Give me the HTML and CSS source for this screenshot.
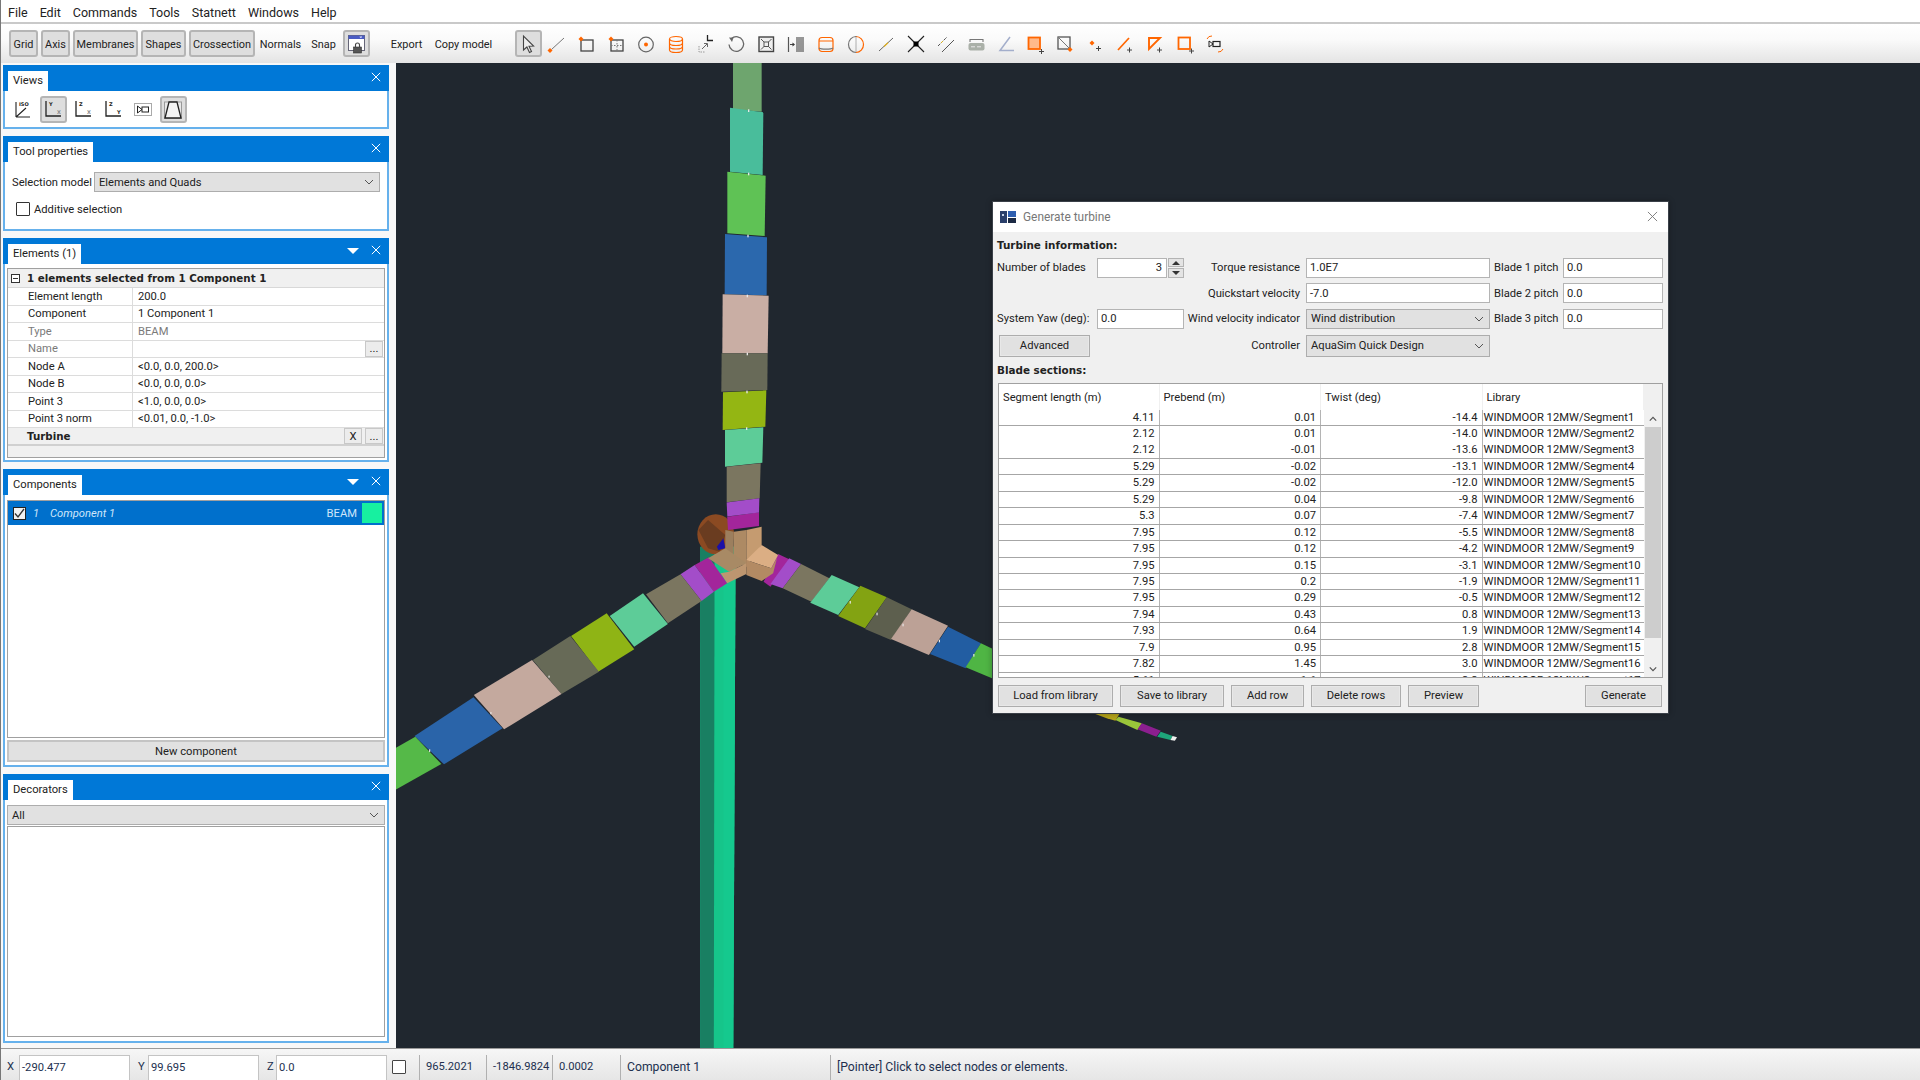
FILE: index.html
```html
<!DOCTYPE html>
<html lang="en">
<head>
<meta charset="utf-8">
<title>Generate turbine</title>
<link rel="stylesheet" href="styles.css">
</head>
<body>
<div class="app">
  <nav class="menubar"><span>File</span><span>Edit</span><span>Commands</span><span>Tools</span><span>Statnett</span><span>Windows</span><span>Help</span></nav>

  <div class="toolbar">
    <div class="tb-left">
      <button class="tbtn on w-grid">Grid</button>
      <button class="tbtn on w-axis">Axis</button>
      <button class="tbtn on w-memb">Membranes</button>
      <button class="tbtn on w-shape">Shapes</button>
      <button class="tbtn on w-cross">Crossection</button>
      <button class="tbtn w-norm">Normals</button>
      <button class="tbtn w-snap">Snap</button>
      <button class="tbtn on w-lock" aria-label="Lock">
        <svg width="21" height="21" viewBox="0 0 21 21"><rect x="2.500" y="1.500" width="16" height="15" fill="#fff" stroke="#667"/><rect x="2.500" y="1.500" width="16" height="3.500" fill="#4a5cc4"/><path d="M14 2.300l1.600 1.600m0-1.600l-1.600 1.600" stroke="#fff" stroke-width=".7"/><rect x="7.500" y="13" width="8" height="6" fill="#555" stroke="#333" stroke-width=".6"/><path d="M9.500 13v-2a2 2 0 0 1 4 0v2" fill="none" stroke="#444" stroke-width="1.100"/></svg>
      </button>
      <button class="tbtn w-export">Export</button>
      <button class="tbtn w-copy">Copy model</button>
    </div>
    <div class="tb-icons">
      <span class="ic ic-on"><svg width="20" height="20" viewBox="0 0 20 20"><path d="M5.500 2v14l3.400-3 2.600 5.500 2-1-2.500-5.200 4.600-.3z" fill="#eee" stroke="#444" stroke-width="1.100"/></svg></span>
      <svg class="ic" viewBox="0 0 20 20"><path d="M5.500 15.500L18 4" stroke="#777"/><path d="M4 14l2.500 2.500L4 19l-2.500-2.500z" fill="#f60"/></svg>
      <svg class="ic" viewBox="0 0 20 20"><rect x="5" y="6" width="12" height="11" fill="none" stroke="#444" stroke-width="1.300"/><path d="M5 2.500L7.500 5 5 7.500 2.500 5z" fill="#f60"/></svg>
      <svg class="ic" viewBox="0 0 20 20"><rect x="5" y="6" width="12" height="11" fill="none" stroke="#444" stroke-width="1.300"/><path d="M11 6v11M5 11.500h12" stroke="#777" stroke-dasharray="1.500 1.500"/><path d="M5 2.500L7.500 5 5 7.500 2.500 5z" fill="#f60"/></svg>
      <svg class="ic" viewBox="0 0 20 20"><circle cx="10" cy="10.500" r="7.300" fill="none" stroke="#666" stroke-width="1.200"/><circle cx="10" cy="10.500" r="2" fill="#f60"/></svg>
      <svg class="ic" viewBox="0 0 20 20"><g fill="none" stroke="#f60" stroke-width="1.200"><ellipse cx="10" cy="5" rx="6.500" ry="2.500"/><path d="M3.500 5v11c0 1.500 3 2.500 6.500 2.500s6.500-1 6.500-2.500V5M3.500 9c0 1.500 3 2.500 6.500 2.500S16.500 10.500 16.500 9M3.500 12.500c0 1.500 3 2.500 6.500 2.500s6.500-1 6.500-2.500"/></g></svg>
      <svg class="ic" viewBox="0 0 20 20"><path d="M11.500 1v5.500H17" fill="none" stroke="#222" stroke-width="1.300"/><path d="M3 12v6h6" fill="none" stroke="#999" stroke-dasharray="1.500 1"/><path d="M6 15l5-5M8 9.500h3.500V13" fill="none" stroke="#666"/></svg>
      <svg class="ic" viewBox="0 0 20 20"><path d="M5.500 4.500A7.300 7.300 0 1 1 3 10.500" fill="none" stroke="#666" stroke-width="1.300"/><path d="M3 3.500l4.500.2L6 8z" fill="#666"/></svg>
      <svg class="ic" viewBox="0 0 20 20"><rect x="3" y="3" width="14.500" height="14.500" fill="#eee" stroke="#444" stroke-width="1.400"/><rect x="8" y="8" width="4.500" height="4.500" fill="none" stroke="#555"/><path d="M5 5l3 3M15.500 5l-3 3M5 15.500l3-3M15.500 15.500l-3-3" stroke="#555"/></svg>
      <svg class="ic" viewBox="0 0 20 20"><path d="M2.500 3v15" stroke="#555" stroke-width="1.200"/><path d="M4 10.500h4" stroke="#444"/><path d="M6.500 8.500l2.500 2-2.500 2z" fill="#333"/><path d="M11 3v15M13 3v15M15 3v15M17 3v15" stroke="#555" stroke-width="1.200"/></svg>
      <svg class="ic" viewBox="0 0 20 20"><rect x="3" y="3.500" width="14" height="14" rx="3" fill="none" stroke="#f60" stroke-width="1.200"/><path d="M3 7h14" stroke="#f60"/><path d="M3 14c2 1.500 12 1.500 14 0" fill="none" stroke="#777" stroke-width="1.200"/></svg>
      <svg class="ic" viewBox="0 0 20 20"><path d="M10 2.500a7.500 8 0 0 0 0 16" fill="none" stroke="#777" stroke-width="1.200"/><path d="M10 2.500a7.500 8 0 0 1 0 16" fill="none" stroke="#f60" stroke-width="1.200"/><path d="M10 2.500v16" stroke="#666" stroke-dasharray="1 1"/></svg>
      <svg class="ic" viewBox="0 0 20 20"><path d="M3 17L17 4" stroke="#666"/><path d="M8 12.500l4-3.700" stroke="#e0b020" stroke-width="1.200"/></svg>
      <svg class="ic" viewBox="0 0 20 20"><path d="M2 2l16 16M18 2L2 18" stroke="#222" stroke-width="1.100"/><rect x="7.500" y="7.500" width="5" height="5" fill="#000"/></svg>
      <svg class="ic" viewBox="0 0 20 20"><path d="M2 12L11 3" stroke="#555" stroke-dasharray="3 1"/><path d="M6 18L18 6" stroke="#555"/><path d="M5 9l2-2" stroke="#d8b020"/></svg>
      <svg class="ic" viewBox="0 0 20 20"><path d="M4 5.500h13M4 5v3M17 5v3" stroke="#777" stroke-width="1.100" fill="none"/><rect x="2.500" y="9" width="16" height="7.500" rx="2" fill="#aab0a8"/><path d="M5 12.800h4M11 12.800h4" stroke="#e8e8e8"/></svg>
      <svg class="ic" viewBox="0 0 20 20"><path d="M14 3L4 16.500h14" fill="none" stroke="#a3aecb" stroke-width="1.500"/></svg>
      <svg class="ic" viewBox="0 0 20 20"><rect x="3.500" y="3.500" width="11.500" height="11.500" fill="#ffb98a" stroke="#f60" stroke-width="1.800"/><path d="M14 17.500h5M16.500 15v5" stroke="#444"/></svg>
      <svg class="ic" viewBox="0 0 20 20"><rect x="3" y="3" width="12" height="12" fill="none" stroke="#555" stroke-width="1.300"/><path d="M3 3l12 12" stroke="#777"/><path d="M15 13l2.500 2.500-2.500 2.500-2.500-2.500z" fill="#f60"/></svg>
      <svg class="ic" viewBox="0 0 20 20"><path d="M7 6.500l2.500 2.500L7 11.500 4.500 9z" fill="#f60"/><path d="M11 14.500h5M13.500 12v5" stroke="#444"/></svg>
      <svg class="ic" viewBox="0 0 20 20"><path d="M3 16L14 4" stroke="#f60" stroke-width="1.700"/><path d="M12 16h5M14.500 13.500v5" stroke="#444"/></svg>
      <svg class="ic" viewBox="0 0 20 20"><path d="M4 4h11L4 15z" fill="none" stroke="#f60" stroke-width="1.900"/><path d="M12 16h5M14.500 13.500v5" stroke="#444"/></svg>
      <svg class="ic" viewBox="0 0 20 20"><rect x="3.500" y="3.500" width="11.500" height="11.500" fill="none" stroke="#f60" stroke-width="1.800"/><path d="M14 17h5M16.500 14.500v5" stroke="#444"/></svg>
      <svg class="ic" viewBox="0 0 20 20"><path d="M2 5a5 5 0 0 1 5-3M18 15a5 5 0 0 1-5 3" fill="none" stroke="#f60"/><path d="M4 7v6l4-3z" fill="none" stroke="#222"/><rect x="8" y="7.500" width="7" height="5" fill="none" stroke="#222" stroke-width="1.200"/></svg>
    </div>
  </div>

  <div class="main">
    <aside class="sidebar">
      <section class="panel p-views">
        <header class="phead"><span class="ptab">Views</span><svg class="px" viewBox="0 0 12 12"><path d="M1 1l10 10M11 1L1 11"/></svg></header>
        <div class="views">
          <svg class="ic" viewBox="0 0 20 20"><path d="M3 2v15M3 17h14M3 17L13 8" stroke="#222" fill="none" stroke-width="1.100"/><text x="6" y="6" class="tiny">ISO</text></svg>
          <span class="ic ic-on"><svg width="20" height="20" viewBox="0 0 20 20"><path d="M3 1v15h15" stroke="#222" fill="none" stroke-width="1.300"/><text x="6" y="6" class="tiny">Y</text><text x="14" y="14" class="tiny light">X</text></svg></span>
          <svg class="ic" viewBox="0 0 20 20"><path d="M3 1v15h15" stroke="#222" fill="none" stroke-width="1.300"/><text x="6" y="6" class="tiny">Z</text><text x="14" y="14" class="tiny light">X</text></svg>
          <svg class="ic" viewBox="0 0 20 20"><path d="M3 1v15h15" stroke="#222" fill="none" stroke-width="1.300"/><text x="6" y="6" class="tiny">Z</text><text x="14" y="14" class="tiny">Y</text></svg>
          <svg class="ic" viewBox="0 0 20 20"><rect x="1.500" y="3.500" width="17" height="12" fill="none" stroke="#555" stroke-dasharray="1 1"/><path d="M4.500 6v7l4.500-3.500z" fill="none" stroke="#222"/><rect x="9" y="7" width="6.500" height="5" fill="none" stroke="#222"/></svg>
          <span class="ic ic-on"><svg width="20" height="20" viewBox="0 0 20 20"><rect x="1.500" y="2" width="17" height="16" fill="#e8e8e8" stroke="#999"/><path d="M2 18L6 2h8l4 16z" fill="#f4f4f4" stroke="#222" stroke-width="1.300"/></svg></span>
        </div>
      </section>

      <section class="panel p-tool">
        <header class="phead"><span class="ptab">Tool properties</span><svg class="px" viewBox="0 0 12 12"><path d="M1 1l10 10M11 1L1 11"/></svg></header>
        <div class="tool">
          <div class="tool-row"><label class="tool-label">Selection model</label>
            <div class="combo tool-combo"><span>Elements and Quads</span><svg class="chev" viewBox="0 0 10 6"><path d="M1 1l4 4 4-4"/></svg></div></div>
          <div class="check-row"><span class="check"></span><span>Additive selection</span></div>
        </div>
      </section>

      <section class="panel p-elem">
        <header class="phead"><span class="ptab">Elements (1)</span><span class="ptri"></span><svg class="px" viewBox="0 0 12 12"><path d="M1 1l10 10M11 1L1 11"/></svg></header>
        <div class="tree">
          <div class="tree-head"><span class="minus"></span><b>1 elements selected from 1 Component 1</b></div>
          <div class="trow"><span>Element length</span><span>200.0</span></div>
          <div class="trow"><span>Component</span><span>1 Component 1</span></div>
          <div class="trow dim"><span>Type</span><span>BEAM</span></div>
          <div class="trow dim"><span>Name</span><span class="tval"><i class="more">...</i></span></div>
          <div class="trow"><span>Node A</span><span>&lt;0.0, 0.0, 200.0&gt;</span></div>
          <div class="trow"><span>Node B</span><span>&lt;0.0, 0.0, 0.0&gt;</span></div>
          <div class="trow"><span>Point 3</span><span>&lt;1.0, 0.0, 0.0&gt;</span></div>
          <div class="trow"><span>Point 3 norm</span><span>&lt;0.01, 0.0, -1.0&gt;</span></div>
          <div class="tree-sub"><b>Turbine</b><i class="more">X</i><i class="more">...</i></div>
          <div class="tree-fill"></div>
        </div>
      </section>

      <section class="panel p-comp">
        <header class="phead"><span class="ptab">Components</span><span class="ptri"></span><svg class="px" viewBox="0 0 12 12"><path d="M1 1l10 10M11 1L1 11"/></svg></header>
        <div class="comp">
          <div class="comp-list">
            <div class="comp-row">
              <span class="comp-check"><svg width="13" height="13" viewBox="0 0 13 13"><path d="M2 6.500l3 3.500 6-8" fill="none" stroke="#333" stroke-width="1.300"/></svg></span>
              <em class="comp-id">1</em><em class="comp-name">Component 1</em><span class="comp-type">BEAM</span><span class="swatch"></span>
            </div>
          </div>
          <button class="wide-btn">New component</button>
        </div>
      </section>

      <section class="panel p-deco">
        <header class="phead"><span class="ptab">Decorators</span><svg class="px" viewBox="0 0 12 12"><path d="M1 1l10 10M11 1L1 11"/></svg></header>
        <div class="deco">
          <div class="combo deco-combo"><span>All</span><svg class="chev" viewBox="0 0 10 6"><path d="M1 1l4 4 4-4"/></svg></div>
          <div class="deco-list"></div>
        </div>
      </section>
    </aside>

    <div class="viewport">
      <svg class="scene" viewBox="0 0 1524 985" width="1524" height="985" aria-hidden="true">
        <g transform="translate(4,417) scale(.3827,.3333)">
          <polygon points="785,200 877,200 871,1704 784,1704" fill="#16c58a"/>
          <polygon points="785,200 822,200 820,1704 784,1704" fill="#197f62"/>
          <polygon points="845,200 877,200 871,1704 845,1704" fill="#15c98e"/>
          <ellipse cx="825" cy="163" rx="48" ry="60" fill="#8b4a22"/>
          <polygon points="780,150 805,120 850,165 835,215 805,205" fill="#6a3c20"/>
          <polygon points="828,200 845,175 850,205 832,210" fill="#1a10a8"/>
          <polygon points="770,255 807,232 855,310 820,335" fill="#a3259b"/>
          <polygon points="733,283 770,255 820,335 788,363" fill="#a34dc9"/>
          <polygon points="643,343 733,283 788,363 700,430" fill="#7b7660"/>
          <polygon points="548,408 635,340 700,432 612,500" fill="#5dcc98"/>
          <polygon points="447,468 540,400 612,508 518,575" fill="#8fb415"/>
          <polygon points="347,540 445,468 520,575 422,642" fill="#676a57"/>
          <polygon points="193,645 345,540 422,642 272,748" fill="#c4a99e"/>
          <polygon points="38,768 192,652 268,745 115,853" fill="#2a64a9"/>
          <polygon points="-20,810 40,770 108,852 -20,935" fill="#55b948"/>
          <polygon points="988,222 1017,238 968,320 950,305" fill="#a3259b"/>
          <polygon points="1017,235 1048,252 1000,325 968,312" fill="#a34dc9"/>
          <polygon points="1048,252 1122,295 1075,365 1000,325" fill="#7b7660"/>
          <polygon points="1128,285 1200,322 1145,405 1072,368" fill="#5dcc98"/>
          <polygon points="1203,317 1272,352 1215,445 1145,408" fill="#83a312"/>
          <polygon points="1272,352 1337,388 1283,480 1215,447" fill="#5d5f4e"/>
          <polygon points="1337,388 1432,437 1382,525 1283,477" fill="#bca196"/>
          <polygon points="1432,440 1518,490 1478,565 1385,522" fill="#225da2"/>
          <polygon points="1518,490 1600,535 1600,620 1478,562" fill="#4fb544"/>
          <polygon points="855,110 938,97 938,138 857,150" fill="#a3259b"/>
          <polygon points="905,150 945,140 945,195 905,262" fill="#c59b70"/>
          <polygon points="872,155 905,150 905,262 872,230" fill="#ad8a64"/>
          <polygon points="850,150 872,155 872,230 850,210" fill="#9c7f5e"/>
          <polygon points="805,235 850,205 905,250 860,275" fill="#a88a65"/>
          <polygon points="860,275 905,250 905,282 855,310 838,280" fill="#bd9670"/>
          <polygon points="945,195 988,225 970,265 905,240" fill="#dbae84"/>
          <polygon points="905,240 970,265 985,235 975,280 945,303 905,285" fill="#b38a63"/>
          <g fill="#e8e8e8">
            <rect x="76" y="808" width="3" height="8"/><rect x="236" y="696" width="3" height="7"/><rect x="388" y="587" width="3" height="6"/>
            <rect x="1498" y="522" width="3" height="8"/><rect x="1408" y="479" width="3" height="8"/><rect x="1313" y="431" width="3" height="8"/><rect x="1245" y="398" width="3" height="8"/><rect x="1175" y="363" width="3" height="8"/>
          </g>
        </g>
        <g transform="translate(284,-3) scale(.3333)">
          <polygon points="159,0 245,0 245,155 159,148" fill="#6ea56e"/>
          <polygon points="150,143 250,157 248,345 150,335" fill="#49bd9b"/>
          <polygon points="142,335 257,347 254,528 142,520" fill="#5fc255"/>
          <polygon points="135,522 261,532 260,706 134,703" fill="#2b68ad"/>
          <polygon points="128,703 266,707 263,880 127,880" fill="#c9aea4"/>
          <polygon points="125,880 263,880 262,990 124,995" fill="#686a58"/>
          <polygon points="129,997 259,991 256,1100 128,1110" fill="#94b613"/>
          <polygon points="135,1110 250,1102 247,1208 135,1220" fill="#5dcc98"/>
          <polygon points="140,1220 242,1210 239,1315 140,1327" fill="#7b7660"/>
          <polygon points="140,1328 238,1315 237,1358 142,1370" fill="#a34dc9"/>
          <g fill="#e8e8e8"><rect x="204" y="148" width="4" height="8"/><rect x="204" y="338" width="4" height="8"/><rect x="202" y="524" width="4" height="8"/><rect x="200" y="704" width="4" height="8"/><rect x="200" y="878" width="4" height="8"/><rect x="199" y="992" width="4" height="8"/><rect x="198" y="1102" width="4" height="8"/></g>
        </g>
        <g transform="translate(594,317) scale(.4401,.3333)">
          <polygon points="235,1000 295,1000 285,1022 265,1015" fill="#b5a51a"/>
          <polygon points="292,1010 345,1030 335,1050 285,1020" fill="#9ac53a"/>
          <polygon points="345,1030 388,1052 378,1070 335,1048" fill="#8c1f8f"/>
          <polygon points="388,1055 415,1068 410,1080 380,1070" fill="#1ea57a"/>
          <polygon points="415,1068 425,1072 420,1082 410,1080" fill="#eee"/>
        </g>
      </svg>

      <div class="dialog">
        <div class="dlg-title">
          <svg width="16" height="12" viewBox="0 0 16 12"><rect width="7" height="12" fill="#2a3f6a"/><rect x="8" width="8" height="6" fill="#2f5fb0"/><rect x="8" y="7" width="8" height="5" fill="#1c2a44"/><rect x="2" y="3" width="2" height="2" fill="#c9d4e8"/></svg>
          <span class="dlg-name">Generate turbine</span>
          <svg class="dlg-x" viewBox="0 0 12 12"><path d="M1 1l10 10M11 1L1 11"/></svg>
        </div>
        <div class="dlg-body">
          <div class="dlg-h">Turbine information:</div>
          <div class="form">
            <span>Number of blades</span>
            <div class="spin"><span class="input num">3</span><span class="spin-btns"><i class="up"></i><i class="down"></i></span></div>
            <span class="ra">Torque resistance</span><span class="input">1.0E7</span>
            <span class="pl">Blade 1 pitch</span><span class="input">0.0</span>

            <span></span><span></span>
            <span class="ra">Quickstart velocity</span><span class="input">-7.0</span>
            <span class="pl">Blade 2 pitch</span><span class="input">0.0</span>

            <span>System Yaw (deg):</span><span class="input">0.0</span>
            <span class="ra">Wind velocity indicator</span>
            <div class="combo"><span>Wind distribution</span><svg class="chev" viewBox="0 0 10 6"><path d="M1 1l4 4 4-4"/></svg></div>
            <span class="pl">Blade 3 pitch</span><span class="input">0.0</span>

            <button class="dbtn adv">Advanced</button><span></span>
            <span class="ra">Controller</span>
            <div class="combo"><span>AquaSim Quick Design</span><svg class="chev" viewBox="0 0 10 6"><path d="M1 1l4 4 4-4"/></svg></div>
            <span></span><span></span>
          </div>
          <div class="dlg-h h2">Blade sections:</div>
          <div class="table">
            <div class="tbl">
              <div class="tr th"><span>Segment length (m)</span><span>Prebend (m)</span><span>Twist (deg)</span><span>Library</span></div>
              <div class="tr"><span>4.11</span><span>0.01</span><span>-14.4</span><span>WINDMOOR 12MW/Segment1</span></div>
              <div class="tr"><span>2.12</span><span>0.01</span><span>-14.0</span><span>WINDMOOR 12MW/Segment2</span></div>
              <div class="tr"><span>2.12</span><span>-0.01</span><span>-13.6</span><span>WINDMOOR 12MW/Segment3</span></div>
              <div class="tr"><span>5.29</span><span>-0.02</span><span>-13.1</span><span>WINDMOOR 12MW/Segment4</span></div>
              <div class="tr"><span>5.29</span><span>-0.02</span><span>-12.0</span><span>WINDMOOR 12MW/Segment5</span></div>
              <div class="tr"><span>5.29</span><span>0.04</span><span>-9.8</span><span>WINDMOOR 12MW/Segment6</span></div>
              <div class="tr"><span>5.3</span><span>0.07</span><span>-7.4</span><span>WINDMOOR 12MW/Segment7</span></div>
              <div class="tr"><span>7.95</span><span>0.12</span><span>-5.5</span><span>WINDMOOR 12MW/Segment8</span></div>
              <div class="tr"><span>7.95</span><span>0.12</span><span>-4.2</span><span>WINDMOOR 12MW/Segment9</span></div>
              <div class="tr"><span>7.95</span><span>0.15</span><span>-3.1</span><span>WINDMOOR 12MW/Segment10</span></div>
              <div class="tr"><span>7.95</span><span>0.2</span><span>-1.9</span><span>WINDMOOR 12MW/Segment11</span></div>
              <div class="tr"><span>7.95</span><span>0.29</span><span>-0.5</span><span>WINDMOOR 12MW/Segment12</span></div>
              <div class="tr"><span>7.94</span><span>0.43</span><span>0.8</span><span>WINDMOOR 12MW/Segment13</span></div>
              <div class="tr"><span>7.93</span><span>0.64</span><span>1.9</span><span>WINDMOOR 12MW/Segment14</span></div>
              <div class="tr"><span>7.9</span><span>0.95</span><span>2.8</span><span>WINDMOOR 12MW/Segment15</span></div>
              <div class="tr"><span>7.82</span><span>1.45</span><span>3.0</span><span>WINDMOOR 12MW/Segment16</span></div>
              <div class="tr"><span>5.61</span><span>1.6</span><span>3.2</span><span>WINDMOOR 12MW/Segment17</span></div>
            </div>
            <div class="sb">
              <svg class="sb-arrow" viewBox="0 0 10 6"><path d="M1 5l4-4 4 4"/></svg>
              <div class="sb-thumb"></div>
              <svg class="sb-arrow" viewBox="0 0 10 6"><path d="M1 1l4 4 4-4"/></svg>
            </div>
          </div>
          <div class="dlg-btns">
            <button class="dbtn b1">Load from library</button>
            <button class="dbtn b2">Save to library</button>
            <button class="dbtn b3">Add row</button>
            <button class="dbtn b4">Delete rows</button>
            <button class="dbtn b5">Preview</button>
            <button class="dbtn b6">Generate</button>
          </div>
        </div>
      </div>
    </div>
  </div>

  <footer class="status">
    <span class="s-l">X</span><span class="s-in">-290.477</span>
    <span class="s-l s-y">Y</span><span class="s-in">99.695</span>
    <span class="s-l s-z">Z</span><span class="s-in">0.0</span>
    <span class="s-check"></span>
    <span class="s-c c1">965.2021</span>
    <span class="s-c c2">-1846.9824</span>
    <span class="s-c c3">0.0002</span>
    <span class="s-c c4">Component 1</span>
    <span class="s-c c5">[Pointer] Click to select nodes or elements.</span>
  </footer>
</div>
</body>
</html>
```

FILE: styles.css
```css
* { box-sizing: border-box; }
html, body { margin: 0; height: 100%; }
body { font: 11.2px Roboto, "Liberation Sans", sans-serif; color: #222; background: #fff; overflow: hidden; }
button { font: inherit; color: inherit; padding: 0; cursor: default; }

.app { width: 1920px; height: 1080px; display: flex; flex-direction: column; border-left: 1px solid #777; }

/* menu */
.menubar { height: 24px; flex: none; display: flex; align-items: center; gap: 12px; padding: 2px 0 0 7px; font-size: 12.5px; background: #fff; border-bottom: 2px solid #c9c9c9; }

/* toolbar */
.toolbar { height: 39px; flex: none; display: flex; align-items: center; background: linear-gradient(#fff, #fafafa 40%, #e4e4e4); }
.tb-left { display: flex; align-items: center; height: 27px; padding-left: 8px; gap: 3px; }
.tbtn { height: 27px; padding-top: 1px; border: 1px solid transparent; background: none; border-radius: 3px; display: flex; align-items: center; justify-content: center; white-space: nowrap; font-size: 10.9px; }
.tbtn.on { background: #dedede; border: 2px solid #b5b5b5; }
.w-grid { width: 29px; } .w-axis { width: 29px; } .w-memb { width: 65px; } .w-shape { width: 45px; } .w-cross { width: 66px; }
.w-norm { width: 45px; } .w-snap { width: 31px; margin-left: 2px; } .w-lock { width: 27px; margin-left: 1px; }
.w-export { width: 37px; margin-left: 15px; } .w-copy { width: 62px; margin-left: 4.5px; }
.tb-icons { display: flex; align-items: center; gap: 9.95px; margin-left: 20px; }
.ic { width: 20px; height: 20px; flex: none; display: block; overflow: visible; }
.ic-on { width: 27px; height: 27px; margin: 0 -3.5px; display: flex; align-items: center; justify-content: center; background: #dedede; border: 2px solid #b5b5b5; border-radius: 3px; }
.tb-icons .ic-on { margin: 0 -5px 0 0; }
.tiny { font: bold 5px "DejaVu Sans", sans-serif; fill: #222; }
.tiny.light { fill: #888; }

/* main */
.main { flex: 1; min-height: 0; display: flex; }
.sidebar { width: 395px; flex: none; background: #f8f8f8; padding: 2px 0 0 2px; display: flex; flex-direction: column; gap: 7px; }
.viewport { flex: 1; position: relative; overflow: hidden; background: #20272f; }
.scene { position: absolute; left: 0; top: 0; display: block; }

/* panels */
.panel { width: 386px; display: flex; flex-direction: column; background: #fff; border: 2px solid #66b1ec; border-top: none; }
.p-views { height: 64px; } .p-tool { height: 95px; } .p-elem { height: 224px; } .p-comp { height: 298px; } .p-deco { height: 269px; }
.phead { height: 26px; flex: none; margin: 0 -2px; background: #0078d7; display: flex; align-items: flex-end; padding-left: 5px; color: #fff; }
.ptab { height: 20px; padding: 0 5px 2px; display: flex; align-items: center; background: #fff; color: #222; }
.px { width: 10px; height: 10px; margin: 0 8px 9px 12px; fill: none; stroke: #fff; stroke-width: 1.2; flex: none; }
.ptab + .px { margin-left: auto; }
.ptri { margin: 0 0 10px auto; width: 0; height: 0; border-left: 6px solid transparent; border-right: 6px solid transparent; border-top: 6px solid #fff; }

.views { flex: 1; display: flex; align-items: center; gap: 10px; padding: 1px 0 0 8px; }

.tool { padding: 10px 7px 0; }
.tool-row { display: flex; align-items: center; }
.tool-label { width: 82px; flex: none; white-space: nowrap; }
.combo { height: 100%; min-height: 20px; display: flex; align-items: center; justify-content: space-between; background: #e1e1e1; border: 1px solid #adadad; padding: 0 5px 0 4px; }
.tool-combo { width: 286px; height: 20px; }
.chev { width: 10px; height: 6px; fill: none; stroke: #555; flex: none; }
.check-row { display: flex; align-items: center; gap: 4px; margin: 10px 0 0 4px; }
.check { width: 14px; height: 14px; border: 1px solid #333; background: #fff; border-radius: 1px; }

/* property tree */
.tree { flex: 1; margin: 4px 2px 2px; border: 1px solid #a0a0a0; display: flex; flex-direction: column; }
.tree-head { height: 19px; flex: none; display: flex; align-items: center; gap: 7px; padding-left: 3px; background: #f0f0f0; border-bottom: 1px solid #d8d8d8; }
.tree-head b { font: bold 10.3px "DejaVu Sans", sans-serif; }
.minus { width: 9px; height: 9px; border: 1px solid #333; position: relative; background: #fff; }
.minus::after { content: ""; position: absolute; left: 1px; right: 1px; top: 3px; height: 1px; background: #333; }
.trow { height: 17.5px; flex: none; display: grid; grid-template-columns: 124px 1fr; border-bottom: 1px solid #dcdcdc; }
.trow > span { display: flex; align-items: center; padding-left: 20px; }
.trow > span + span { padding-left: 5px; border-left: 1px solid #dcdcdc; }
.trow.dim { color: #7a7a7a; }
.tval { justify-content: flex-end; }
.more { font-style: normal; width: 18px; height: 16px; display: flex; align-items: center; justify-content: center; background: #ececec; border: 1px solid #c8c8c8; color: #222; margin-right: 1px; flex: none; }
.tree-sub { height: 18px; flex: none; display: flex; align-items: center; gap: 2px; padding-left: 19px; background: #f0f0f0; border-bottom: 2px solid #d0d0d0; }
.tree-sub b { margin-right: auto; font: bold 10.3px "DejaVu Sans", sans-serif; }
.tree-fill { flex: 1; background: #f0f0f0; }

/* components */
.comp { flex: 1; padding: 5px 2px 3px; display: flex; flex-direction: column; gap: 2px; }
.comp-list { flex: 1; border: 1px solid #a0a0a0; background: #fff; }
.comp-row { height: 24px; display: flex; align-items: center; background: #0070cc; color: #cfe6fa; padding-left: 5px; }
.comp-check { width: 13px; height: 13px; background: #f2f2f2; border: 1px solid #222; display: block; flex: none; }
.comp-check svg { display: block; margin: -1px; }
.comp-id { margin-left: 7px; width: 17px; }
.comp-type { margin-left: auto; }
.swatch { width: 20px; height: 20px; margin: 0 2px 0 5px; background: #17f0a0; }
.wide-btn { height: 22px; background: #e1e1e1; border: 2px solid #c4c4c4; }

/* decorators */
.deco { flex: 1; padding: 5px 2px 4px; display: flex; flex-direction: column; gap: 1px; }
.deco-combo { height: 20px; flex: none; }
.deco-list { flex: 1; border: 1px solid #a0a0a0; background: #fff; }

/* dialog window */
.dialog { position: absolute; left: 596px; top: 138px; width: 677px; height: 513px; display: flex; flex-direction: column; background: #f0f0f0; border: 1px solid #3a4048; box-shadow: 0 0 6px rgba(0,0,0,.3); }
.dlg-title { height: 30px; flex: none; display: flex; align-items: center; background: #fff; padding: 0 0 1px 7px; }
.dlg-name { margin-left: 7px; color: #777; font-size: 11.9px; }
.dlg-x { width: 11px; height: 11px; margin-left: auto; margin-right: 10px; fill: none; stroke: #777; }
.dlg-body { flex: 1; padding: 4px 5px 0 4px; }
.dlg-h { height: 18px; display: flex; align-items: center; font: bold 10.4px "DejaVu Sans", sans-serif; }
.form { display: grid; grid-template-columns: 100px 87px 122px 184px 73px 100px; grid-template-rows: 20px 20px 20px 22px; row-gap: 5.7px; margin-top: 3.5px; align-items: center; }
.ra { text-align: right; padding-right: 6px; white-space: nowrap; }
.pl { padding-left: 4px; white-space: nowrap; }
.input { height: 20px; display: flex; align-items: center; padding-left: 3px; background: #fff; border: 1px solid #b4b4b4; }
.input.num { justify-content: flex-end; padding-right: 4px; flex: 1; }
.spin { display: flex; height: 20px; gap: 1px; }
.spin-btns { width: 16px; flex: none; display: flex; flex-direction: column; gap: 1px; }
.spin-btns i { flex: 1; background: #e4e4e4; border: 1px solid #b4b4b4; position: relative; }
.spin-btns i::after { content: ""; position: absolute; left: 3px; top: 2px; border-left: 4px solid transparent; border-right: 4px solid transparent; }
.spin-btns .up::after { border-bottom: 4px solid #333; }
.spin-btns .down::after { border-top: 4px solid #333; }
.dbtn { height: 22px; background: #e1e1e1; border: 1px solid #adadad; display: flex; align-items: center; justify-content: center; box-shadow: inset 0 0 0 1px #e8e8e8; }
.adv { width: 91px; margin-left: 2px; }
.h2 { margin-top: 4px; }

.table { height: 295px; margin: 4px 0 0 1px; width: 665px; display: flex; border: 1px solid #a0a0a0; overflow: hidden; background: #fff; }
.tbl { width: 645px; flex: none; overflow: hidden; }
.tr { display: grid; grid-template-columns: 160.5px 161.5px 161.5px 161.5px; height: 16.45px; border-bottom: 1.5px solid #a6a6a6; line-height: 15.5px; }
.tr > span { text-align: right; padding-right: 4px; border-right: 1.5px solid #b4b4b4; background: #fff; }
.tr > span:last-child { text-align: left; padding: 0 0 0 1px; border-right: none; }
.tr.th { height: 26px; border-bottom: none; line-height: 27px; padding-bottom: 1px; }
.tr.th > span, .tr.th > span:last-child { text-align: left; padding: 0 0 0 4px; border-right: 1.5px solid #f0f0f0; }
.sb { flex: 1; background: #f0f0f0; display: flex; flex-direction: column; align-items: center; padding-top: 32px; }
.sb-arrow { width: 8px; height: 6px; fill: none; stroke: #555; stroke-width: 1.5; flex: none; }
.sb-thumb { width: 16px; height: 211px; margin: 5px 0 28px; background: #cdcdcd; flex: none; }

.dlg-btns { display: flex; gap: 7px; margin: 7px 0 0 1px; width: 664px; }
.b1 { width: 115px; } .b2 { width: 104px; } .b3 { width: 73px; } .b4 { width: 90px; } .b5 { width: 71px; } .b6 { width: 77px; margin-left: auto; }

/* status bar */
.status { height: 32px; flex: none; display: flex; align-items: stretch; padding: 6px 0 0 6px; color: #22304f; border-top: 1px solid #9a9a9a; background: linear-gradient(#f6f6f6, #e6e6e6); }
.s-l { width: 12px; display: flex; align-items: center; padding-bottom: 2px; }
.s-y { width: 10px; margin-left: 8px; } .s-z { width: 9px; margin-left: 8px; }
.s-in { width: 111px; display: flex; align-items: center; padding: 0 0 2px 2px; background: #fff; border: 1px solid #c4c4c4; border-bottom: none; }
.s-check { width: 14px; height: 14px; margin: 5px 0 0 5px; background: #fff; border: 1px solid #444; border-radius: 1px; flex: none; }
.s-c { display: flex; align-items: center; padding: 0 0 2px 6px; border-left: 1px solid #b0b0b0; white-space: nowrap; }
.c1 { width: 67px; margin-left: 13px; } .c2 { width: 66px; } .c3 { width: 68px; } .c4 { width: 210px; font-size: 12.2px; } .c5 { font-size: 12.2px; }
```
